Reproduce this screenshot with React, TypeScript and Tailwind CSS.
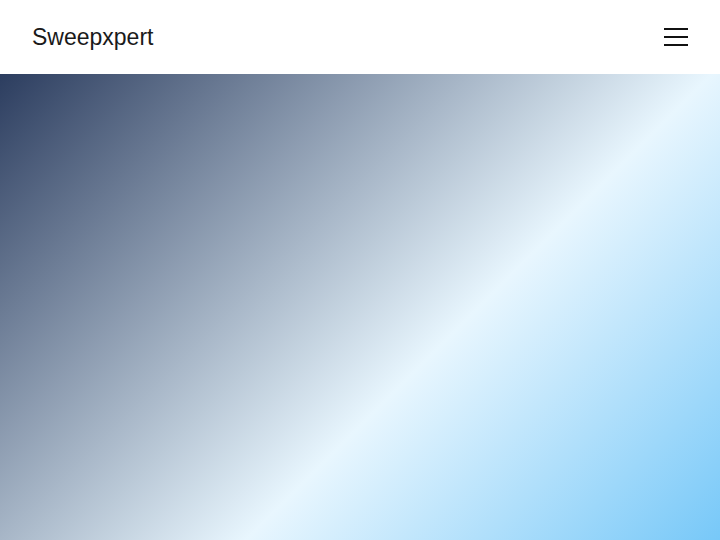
import React from 'react'

export default function App() {
  return (
    <div className="flex h-[540px] w-full flex-col overflow-hidden font-['Liberation_Sans',Arial,sans-serif]">
      <header className="flex h-[74px] shrink-0 items-center justify-between bg-white pl-8 pr-8">
        <span className="text-[23px] text-[#1a1a1a]">Sweepxpert</span>
        <button className="flex h-6 w-6 flex-col justify-center gap-[6px]" aria-label="Menu">
          <span className="block h-[2px] w-6 bg-[#111]" />
          <span className="block h-[2px] w-6 bg-[#111]" />
          <span className="block h-[2px] w-6 bg-[#111]" />
        </button>
      </header>
      <main className="flex-1 bg-[linear-gradient(135deg,#2c3d5f_0%,#e8f6fe_60%,#77c8f8_100%)]" />
    </div>
  )
}
